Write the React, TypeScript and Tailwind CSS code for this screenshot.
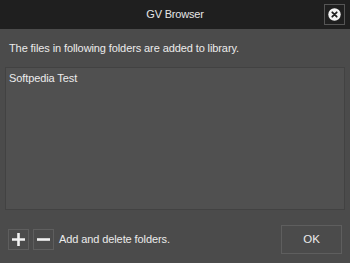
const App = () => {
  return (
    <div
      className="w-[350px] h-[263px] flex flex-col bg-[#4b4b4b] text-[#ececec] overflow-hidden"
      style={{ fontFamily: "'Liberation Sans', Arial, sans-serif" }}
    >
      {/* title bar */}
      <div className="h-[29px] bg-[#1f1f1f] flex items-center relative shrink-0">
        <div className="flex-1 text-center text-[11px] tracking-[-0.2px] text-[#e6e6e6]">GV Browser</div>
        <button className="absolute right-[5px] top-[4px] w-[21px] h-[21px] border border-[#555] flex items-center justify-center">
          <svg width="13" height="13" viewBox="0 0 13 13">
            <circle cx="6.5" cy="6.5" r="6.2" fill="#f4f4f4" />
            <path d="M4.3 4.3 L8.7 8.7 M8.7 4.3 L4.3 8.7" stroke="#1f1f1f" strokeWidth="1.8" strokeLinecap="round" />
          </svg>
        </button>
      </div>

      <div className="flex-1 flex flex-col px-[5px]">
        <div className="pt-[12px] pl-[4px] h-[38px] text-[11px] leading-[14px] tracking-[-0.1px]">
          The files in following folders are added to library.
        </div>
        <div className="h-[143px] bg-[#505050] border border-[#424242] px-[3px] pt-[3px] text-[11px] leading-[14px] tracking-[-0.1px]">
          Softpedia Test
        </div>

        <div className="flex items-center mt-[15px]">
          <div className="flex items-center gap-[4px] pl-[3px]">
            <button className="w-[21px] h-[21px] border border-[#5e5e5e] flex items-center justify-center">
              <svg width="15" height="15" viewBox="0 0 15 15">
                <path d="M7.5 1 V14 M1 7.5 H14" stroke="#f2f2f2" strokeWidth="2.6" />
              </svg>
            </button>
            <button className="w-[21px] h-[21px] border border-[#5e5e5e] flex items-center justify-center">
              <svg width="15" height="15" viewBox="0 0 15 15">
                <path d="M1 7.5 H14" stroke="#f2f2f2" strokeWidth="2.6" />
              </svg>
            </button>
            <span className="text-[11px] tracking-[-0.1px] ml-[1px]">Add and delete folders.</span>
          </div>
          <button className="ml-auto mr-[3px] w-[61px] h-[29px] border border-[#5e5e5e] text-[11.5px] flex items-center justify-center">
            OK
          </button>
        </div>
      </div>
    </div>
  );
};

export default App;
